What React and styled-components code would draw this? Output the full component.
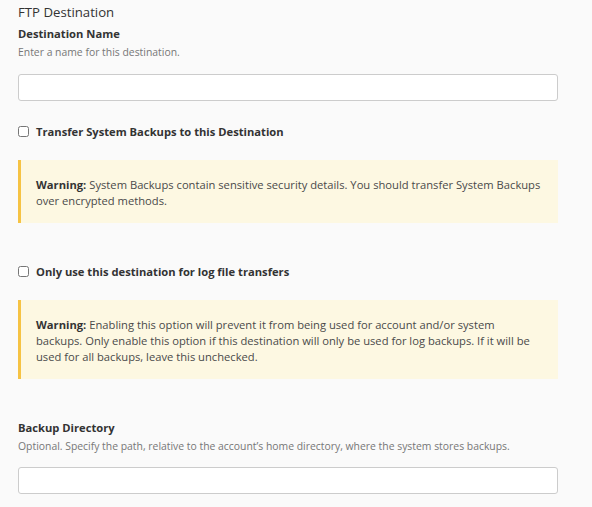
import styled, { createGlobalStyle } from "styled-components";

const GlobalStyle = createGlobalStyle`
  html, body {
    margin: 0;
    background: #fafafa;
  }
  body {
    font-family: "Open Sans", "Liberation Sans", sans-serif;
    color: #333;
  }
`;

const Page = styled.div`
  padding: 2px 34px 0 18px;
  max-width: 540px;
`;

const Title = styled.h2`
  margin: 0 0 4px;
  font-size: 13.2px;
  font-weight: 400;
  line-height: 20px;
  color: #333;
`;

const Field = styled.div`
  margin-top: ${(p) => p.$top || 0}px;
  margin-bottom: ${(p) => p.$gap || 0}px;
`;

const Label = styled.div`
  font-size: 11.2px;
  font-weight: 700;
  line-height: 16px;
  color: #333;
`;

const Help = styled.div`
  margin-top: 2px;
  font-size: 10.4px;
  line-height: 16px;
  color: #777;
`;

const TextInput = styled.input`
  display: block;
  box-sizing: border-box;
  width: 100%;
  height: 27px;
  margin-top: ${(p) => p.$top || 0}px;
  border: 1px solid #ccc;
  border-radius: 3px;
  background: #fff;
  font: inherit;
`;

const CheckRow = styled.label`
  display: flex;
  align-items: center;
  gap: 7px;
  margin-top: ${(p) => p.$top || 0}px;
  font-size: 11.2px;
  font-weight: 700;
  line-height: 17px;
  color: #333;
`;

const Box = styled.input`
  margin: 0;
  width: 11px;
  height: 11px;
`;

const Warning = styled.div`
  margin-top: 20px;
  padding: 17px 16px 14px 15px;
  border-left: 3px solid #f6c344;
  background: #fdf8e2;
  font-size: 11.2px;
  line-height: 16px;
  color: #4a4a4a;

  strong {
    font-weight: 700;
    color: #333;
    margin-right: 3px;
  }
`;

export default function App() {
  return (
    <>
      <GlobalStyle />
      <Page>
        <Title>FTP Destination</Title>
        <Field $gap={22}>
          <Label>Destination Name</Label>
          <Help>Enter a name for this destination.</Help>
          <TextInput type="text" $top={14} />
        </Field>

        <CheckRow>
          <Box type="checkbox" />
          Transfer System Backups to this Destination
        </CheckRow>
        <Warning>
          <strong>Warning:</strong>System Backups contain sensitive security
          details. You should transfer System Backups over encrypted methods.
        </Warning>

        <CheckRow $top={40}>
          <Box type="checkbox" />
          Only use this destination for log file transfers
        </CheckRow>
        <Warning>
          <strong>Warning:</strong>Enabling this option will prevent it from
          being used for account and/or system backups. Only enable this option
          if this destination will only be used for log backups. If it will be
          used for all backups, leave this unchecked.
        </Warning>

        <Field $top={41}>
          <Label>Backup Directory</Label>
          <Help>
            Optional. Specify the path, relative to the account’s home
            directory, where the system stores backups.
          </Help>
          <TextInput type="text" $top={13} />
        </Field>
      </Page>
    </>
  );
}
